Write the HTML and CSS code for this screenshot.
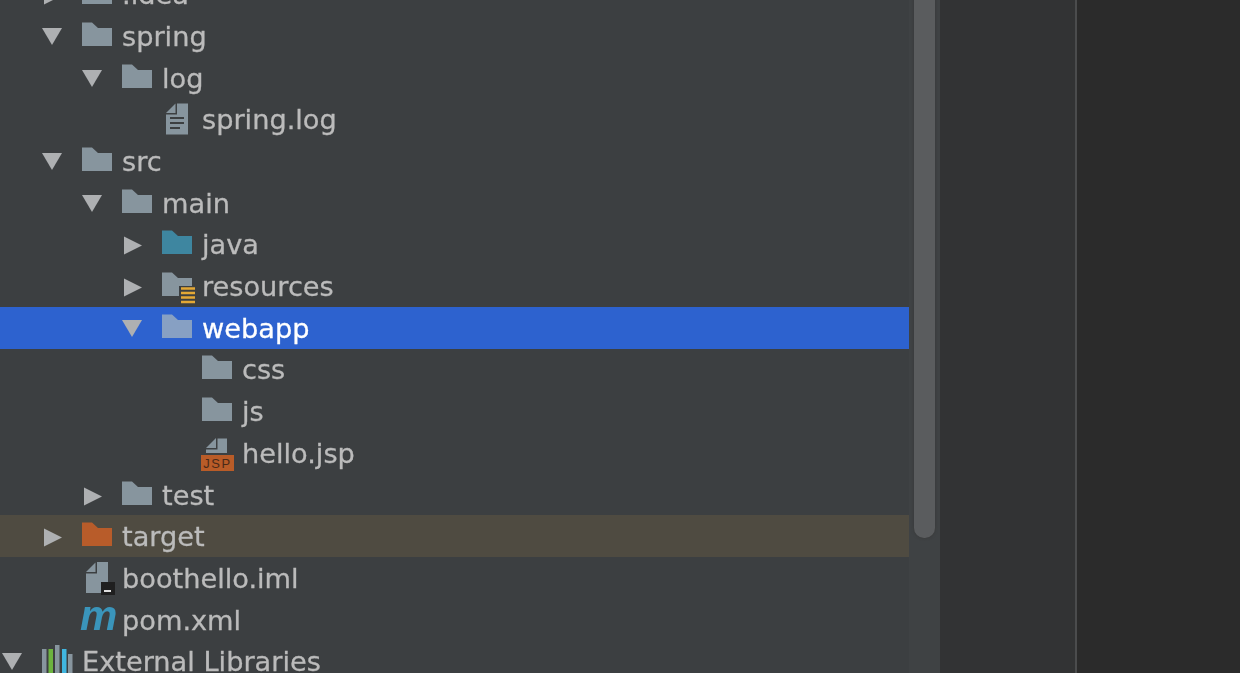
FILE: index.html
```html
<!DOCTYPE html>
<html lang="en">
<head>
    <meta charset="UTF-8">
    <meta name="viewport" content="width=device-width, initial-scale=1.0">
    <title>Project tree</title>
    <link rel="stylesheet" href="styles.css">
</head>
<body>
    <svg class="defs" aria-hidden="true">
        <symbol id="arrow-down" viewBox="0 0 40 42"><path d="M0 13H20L10 30Z"/></symbol>
        <symbol id="arrow-right" viewBox="0 0 40 42"><path d="M2 13.500V31.500L20 22.500Z"/></symbol>
        <symbol id="folder" viewBox="0 0 40 42"><path d="M0 7.500H10L16 13H30V31H0Z"/></symbol>
        <symbol id="doc" viewBox="0 0 40 42">
            <path d="M4 15L13.500 5.500V15Z" fill="#87959e"/>
            <path d="M15 5.500H26V36.500H4V16.500H15Z" fill="#87959e"/>
            <path d="M8 20H22M8 25H22M8 30H18" stroke="#3c3f41" stroke-width="2"/>
        </symbol>
        <symbol id="module" viewBox="0 0 40 42">
            <path d="M4 15L13.500 5.500V15Z" fill="#87959e"/>
            <path d="M15 5H26V36H4V16.500H15Z" fill="#87959e"/>
            <rect x="19" y="25" width="14" height="13" fill="#1f1f1f"/>
            <rect x="22" y="33" width="7" height="2" fill="#e0e0e0"/>
        </symbol>
    </svg>

    <div class="window">
        <div class="tree-panel">
            <ul class="tree">
                <li class="row depth-1">
                    <svg class="arrow"><use href="#arrow-right"/></svg>
                    <svg class="icon folder"><use href="#folder"/></svg>
                    <span class="name">.idea</span>
                </li>
                <li class="row depth-1">
                    <svg class="arrow"><use href="#arrow-down"/></svg>
                    <svg class="icon folder"><use href="#folder"/></svg>
                    <span class="name">spring</span>
                </li>
                <li class="row depth-2">
                    <svg class="arrow"><use href="#arrow-down"/></svg>
                    <svg class="icon folder"><use href="#folder"/></svg>
                    <span class="name">log</span>
                </li>
                <li class="row depth-3">
                    <span class="arrow"></span>
                    <svg class="icon"><use href="#doc"/></svg>
                    <span class="name">spring.log</span>
                </li>
                <li class="row depth-1">
                    <svg class="arrow"><use href="#arrow-down"/></svg>
                    <svg class="icon folder"><use href="#folder"/></svg>
                    <span class="name">src</span>
                </li>
                <li class="row depth-2">
                    <svg class="arrow"><use href="#arrow-down"/></svg>
                    <svg class="icon folder"><use href="#folder"/></svg>
                    <span class="name">main</span>
                </li>
                <li class="row depth-3">
                    <svg class="arrow"><use href="#arrow-right"/></svg>
                    <svg class="icon folder-java"><use href="#folder"/></svg>
                    <span class="name">java</span>
                </li>
                <li class="row depth-3">
                    <svg class="arrow"><use href="#arrow-right"/></svg>
                    <svg class="icon" viewBox="0 0 40 42">
                        <path d="M0 7.500H10L16 13H30V31H0Z" fill="#87959e"/>
                        <rect x="17" y="21" width="16" height="18" fill="#3c3f41"/>
                        <path d="M19 23.500H33M19 28H33M19 32.500H33M19 37H33" stroke="#e3a835" stroke-width="2.400"/>
                    </svg>
                    <span class="name">resources</span>
                </li>
                <li class="row depth-3 selected">
                    <svg class="arrow"><use href="#arrow-down"/></svg>
                    <svg class="icon folder-selected"><use href="#folder"/></svg>
                    <span class="name">webapp</span>
                </li>
                <li class="row depth-4">
                    <span class="arrow"></span>
                    <svg class="icon folder"><use href="#folder"/></svg>
                    <span class="name">css</span>
                </li>
                <li class="row depth-4">
                    <span class="arrow"></span>
                    <svg class="icon folder"><use href="#folder"/></svg>
                    <span class="name">js</span>
                </li>
                <li class="row depth-4">
                    <span class="arrow"></span>
                    <svg class="icon" viewBox="0 0 40 42">
                        <path d="M4 16L14 6V16Z" fill="#87959e"/>
                        <path d="M15.500 6.500H25V21H4V17.500H15.500Z" fill="#87959e"/>
                        <rect x="-1" y="23" width="33" height="16" fill="#b95c28"/>
                        <text class="jsp-label" x="15.500" y="36">JSP</text>
                    </svg>
                    <span class="name">hello.jsp</span>
                </li>
                <li class="row depth-2">
                    <svg class="arrow"><use href="#arrow-right"/></svg>
                    <svg class="icon folder"><use href="#folder"/></svg>
                    <span class="name">test</span>
                </li>
                <li class="row depth-1 excluded">
                    <svg class="arrow"><use href="#arrow-right"/></svg>
                    <svg class="icon folder-target"><use href="#folder"/></svg>
                    <span class="name">target</span>
                </li>
                <li class="row depth-1">
                    <span class="arrow"></span>
                    <svg class="icon"><use href="#module"/></svg>
                    <span class="name">boothello.iml</span>
                </li>
                <li class="row depth-1">
                    <span class="arrow"></span>
                    <svg class="icon" viewBox="0 0 40 42">
                        <text class="maven-label" x="-2" y="31">m</text>
                    </svg>
                    <span class="name">pom.xml</span>
                </li>
                <li class="row depth-0">
                    <svg class="arrow"><use href="#arrow-down"/></svg>
                    <svg class="icon" viewBox="0 0 40 42">
                        <rect x="0" y="9" width="4.500" height="24" fill="#87959e"/>
                        <rect x="6.500" y="9" width="4.500" height="24" fill="#6cb33f"/>
                        <rect x="13" y="5" width="4.500" height="28" fill="#87959e"/>
                        <rect x="20" y="9" width="4.500" height="24" fill="#40b6e0"/>
                        <rect x="26" y="14" width="4.500" height="19" fill="#87959e"/>
                    </svg>
                    <span class="name">External Libraries</span>
                </li>
            </ul>
        </div>
        <div class="scrollbar">
            <div class="thumb"></div>
        </div>
        <div class="gutter"></div>
        <div class="editor"></div>
    </div>
</body>
</html>
```

FILE: styles.css
```css
html, body {
    margin: 0;
    padding: 0;
    height: 100%;
    overflow: hidden;
    background-color: #2b2b2b;
}

.defs {
    display: none;
}

.window {
    display: flex;
    height: 673px;
    font-family: "DejaVu Sans", sans-serif;
}

.tree-panel {
    width: 909px;
    overflow: hidden;
    background-color: #3c3f41;
}

.tree {
    list-style: none;
    margin: -26.6px 0 0 0;
    padding: 0;
    filter: blur(0.5px);
}

.row {
    display: flex;
    align-items: center;
    height: 41.7px;
    font-size: 27.2px;
    color: #bbbbbb;
    white-space: nowrap;
    -webkit-text-stroke: 0.3px currentColor;
}

.depth-0 { padding-left: 2px; }
.depth-1 { padding-left: 42px; }
.depth-2 { padding-left: 82px; }
.depth-3 { padding-left: 122px; }
.depth-4 { padding-left: 162px; }

.selected {
    background-color: #2d62cf;
    color: #ffffff;
}

.excluded {
    background-color: #4f4b41;
}

.arrow, .icon {
    flex: none;
    width: 40px;
    height: 42px;
    overflow: visible;
}

.arrow {
    fill: #aeb0b2;
}

.folder { fill: #87959e; }
.folder-java { fill: #3e86a0; }
.folder-selected { fill: #87a0c3; }
.folder-target { fill: #b85c2a; }

.name {
    margin-top: 1px;
}

.jsp-label {
    font-family: "Liberation Sans", sans-serif;
    font-size: 13px;
    letter-spacing: 1.5px;
    text-anchor: middle;
    fill: #4a2a18;
    -webkit-text-stroke: 0;
}

.maven-label {
    font-family: "Liberation Sans", sans-serif;
    font-size: 42px;
    font-weight: bold;
    font-style: italic;
    fill: #3a95bb;
    -webkit-text-stroke: 0;
}

.scrollbar {
    width: 31px;
    overflow: hidden;
    background-color: #3f4244;
}

.thumb {
    width: 21px;
    height: 558px;
    margin: -20px 0 0 5px;
    border-radius: 10px;
    background-color: #5a5c5e;
    box-shadow: 0 0 3px #383838;
}

.gutter {
    width: 135px;
    background-color: #323334;
    border-right: 2px solid #4b4c4d;
}

.editor {
    flex: 1;
    background-color: #2b2b2b;
}
```
